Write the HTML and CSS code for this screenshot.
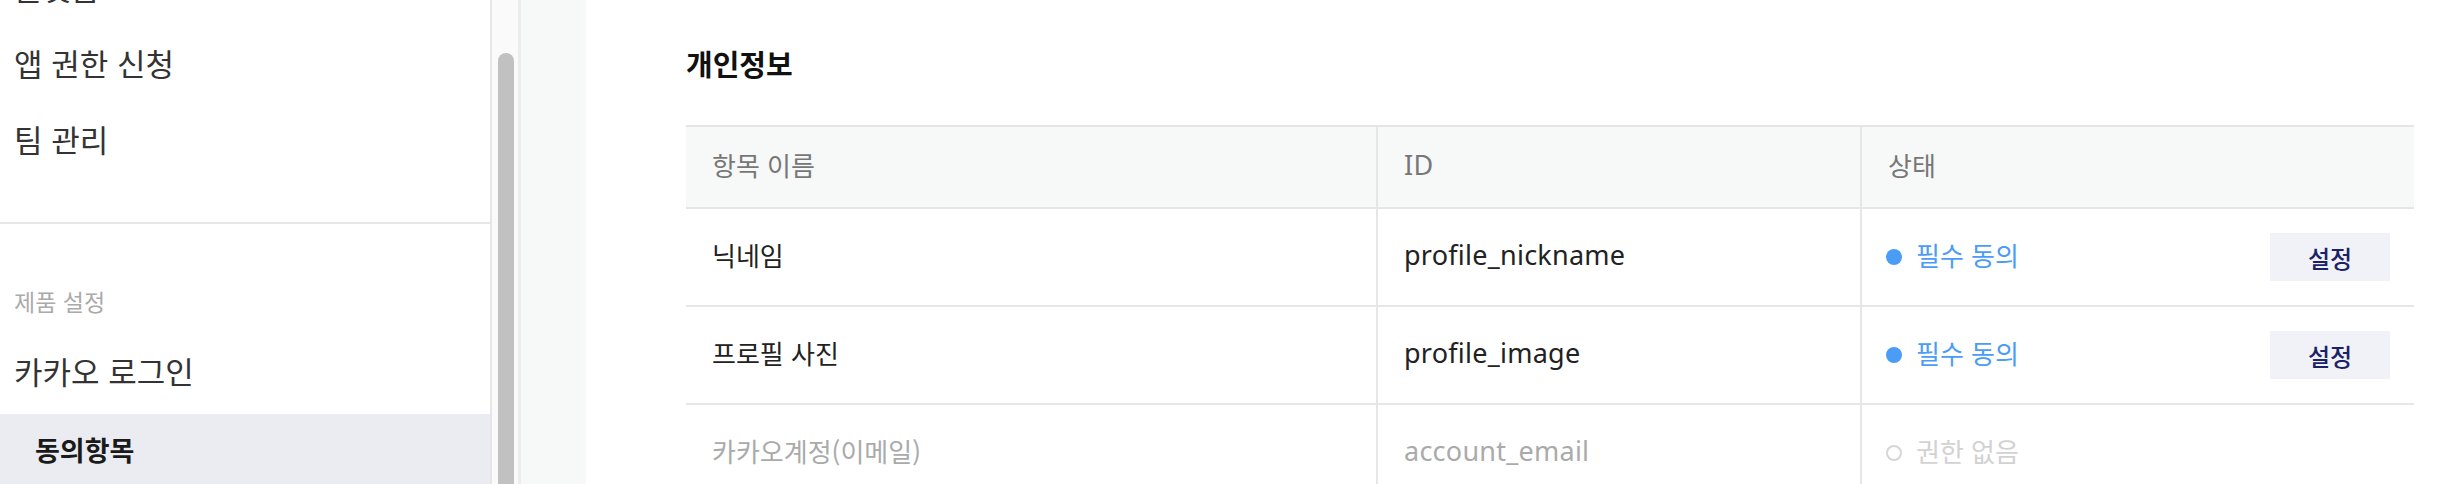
FILE: index.html
```html
<!DOCTYPE html>
<html lang="ko">
<head>
<meta charset="utf-8">
<title>동의항목</title>
<link rel="stylesheet" href="styles.css">
</head>
<body>
<div class="page">
  <nav class="sidebar">
    <div class="sidebar-scroll">
      <div class="nav-group">
        <a class="nav-item">플랫폼</a>
        <a class="nav-item">앱 권한 신청</a>
        <a class="nav-item">팀 관리</a>
      </div>
      <div class="nav-group product">
        <div class="nav-label">제품 설정</div>
        <a class="nav-item nav-item-sm">카카오 로그인</a>
        <a class="nav-sub active">동의항목</a>
      </div>
    </div>
  </nav>
  <div class="scrollbar"><div class="thumb"></div></div>
  <div class="gutter"></div>
  <main class="content">
    <h2 class="section-title">개인정보</h2>
    <div class="table">
      <div class="row head">
        <div class="cell">항목 이름</div>
        <div class="cell latin">ID</div>
        <div class="cell">상태</div>
      </div>
      <div class="row">
        <div class="cell">닉네임</div>
        <div class="cell latin">profile_nickname</div>
        <div class="cell status-cell">
          <span class="status on"><span class="dot"></span>필수 동의</span>
          <button class="btn">설정</button>
        </div>
      </div>
      <div class="row">
        <div class="cell">프로필 사진</div>
        <div class="cell latin">profile_image</div>
        <div class="cell status-cell">
          <span class="status on"><span class="dot"></span>필수 동의</span>
          <button class="btn">설정</button>
        </div>
      </div>
      <div class="row disabled">
        <div class="cell">카카오계정(이메일)</div>
        <div class="cell latin">account_email</div>
        <div class="cell status-cell">
          <span class="status off"><span class="dot"></span>권한 없음</span>
        </div>
      </div>
    </div>
  </main>
</div>
</body>
</html>
```
FILE: styles.css
```css
* { box-sizing: border-box; }
html, body {
  margin: 0;
  padding: 0;
  height: 100%;
  overflow: hidden;
  background: #fff;
}
body {
  font-family: "Noto Sans", "Noto Sans CJK KR", sans-serif;
  color: #222;
}
.page {
  display: flex;
  height: 484px;
  overflow: hidden;
}

/* sidebar */
.sidebar {
  width: 492px;
  flex: 0 0 492px;
  border-right: 2px solid #e6e6e6;
  overflow: hidden;
  background: #fff;
}
.sidebar-scroll {
  margin-top: -51px;
}
.nav-group {
  padding-bottom: 45px;
  border-bottom: 2px solid #e6e6e6;
}
.nav-group.product {
  border-bottom: 0;
  padding-top: 61px;
}
.nav-item {
  display: block;
  padding-left: 14px;
  font-family: "Noto Sans CJK KR", sans-serif;
  font-size: 31px;
  line-height: 76px;
  height: 76px;
  color: #333;
}
.nav-item-sm {
  margin-top: 16px;
  margin-bottom: 5px;
}
.nav-label {
  padding-left: 14px;
  font-family: "Noto Sans CJK KR", sans-serif;
  font-size: 23px;
  line-height: 32px;
  color: #aaa;
}
.nav-sub {
  display: block;
  padding-left: 35px;
  font-family: "Noto Sans CJK KR", sans-serif;
  font-size: 27px;
  line-height: 72px;
  height: 72px;
  font-weight: 700;
  color: #1a1a1a;
}
.nav-sub.active {
  background: #ebecf1;
}

/* fake scrollbar */
.scrollbar {
  width: 29px;
  flex: 0 0 29px;
  background: #fafafa;
  border-right: 3px solid #ececec;
  padding-top: 53px;
  padding-left: 6px;
}
.thumb {
  width: 16px;
  height: 100%;
  background: #c1c1c1;
  border-radius: 8px 8px 0 0;
}
.gutter {
  width: 65px;
  flex: 0 0 65px;
  background: #f7f8f8;
}

/* content */
.content {
  flex: 1;
  padding: 43px 28px 0 100px;
  background: #fff;
}
.section-title {
  margin: 0 0 42px;
  font-family: "Noto Sans CJK KR", sans-serif;
  font-size: 29px;
  line-height: 40px;
  font-weight: 700;
  color: #111;
}
.table {
  border-top: 2px solid #e6e6e6;
}
.row {
  display: grid;
  grid-template-columns: 690px 484px 1fr;
  border-bottom: 2px solid #e6e6e6;
  height: 98px;
}
.row.head {
  height: 82px;
  background: #f7f8f8;
}
.cell {
  display: flex;
  align-items: center;
  padding: 0 24px 6px 26px;
  font-family: "Noto Sans CJK KR", sans-serif;
  font-size: 26px;
  color: #222;
  white-space: nowrap;
}
.cell.latin {
  font-family: "Noto Sans", "Noto Sans CJK KR", sans-serif;
  font-size: 27px;
  letter-spacing: 0.25px;
}
.cell + .cell {
  border-left: 2px solid #e6e6e6;
}
.head .cell {
  color: #777;
}
.status-cell {
  justify-content: space-between;
  padding-left: 24px;
}
.status {
  display: flex;
  align-items: center;
  gap: 14px;
}
.dot {
  width: 16px;
  height: 16px;
  border-radius: 50%;
  margin-top: 6px;
}
.status.on { color: #4b9cf7; }
.status.on .dot { background: #4b9cf7; }
.status.off .dot { border: 2px solid #d6d6d6; }
.disabled .cell { color: #aaa; }
.disabled .status.off { color: #d2d2d2; }
.btn {
  width: 120px;
  height: 48px;
  margin-top: 6px;
  border: 0;
  background: #f0f2f8;
  color: #1b2266;
  font-family: "Noto Sans CJK KR", sans-serif;
  font-size: 24px;
  font-weight: 500;
  padding: 0;
  cursor: pointer;
}
```
